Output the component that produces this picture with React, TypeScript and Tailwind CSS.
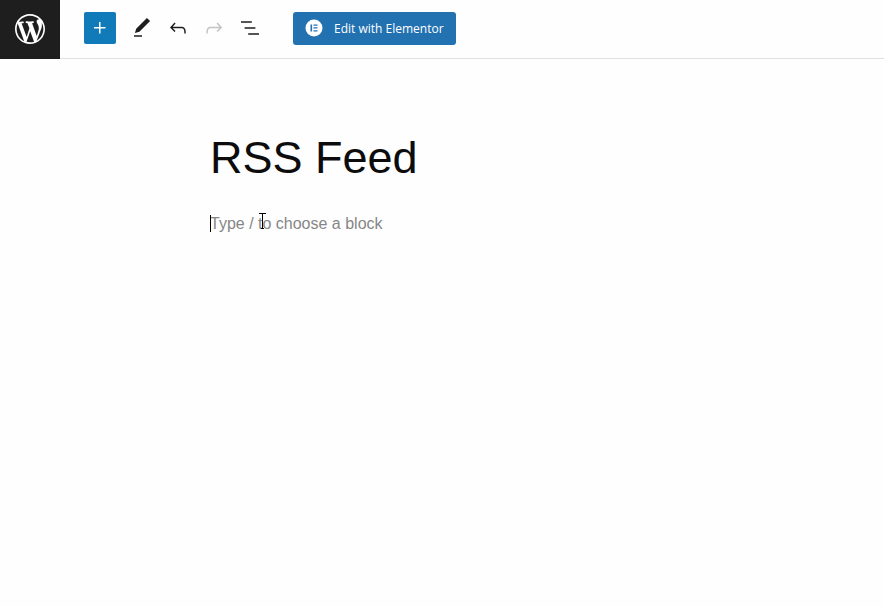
import React from "react";

const WordPressLogo = () => (
  <svg className="size-9" viewBox="-2 -2 24 24" fill="currentColor" aria-hidden="true">
    <path d="M20 10c0-5.51-4.49-10-10-10C4.48 0 0 4.49 0 10c0 5.52 4.48 10 10 10 5.51 0 10-4.48 10-10zM7.78 15.37L4.37 6.22c.55-.02 1.17-.08 1.17-.08.5-.06.44-1.13-.06-1.11 0 0-1.45.11-2.37.11-.18 0-.37 0-.58-.01C4.12 2.69 6.87 1.11 10 1.11c2.33 0 4.45.87 6.05 2.34-.68-.11-1.65.39-1.65 1.58 0 .74.45 1.36.9 2.1.35.61.55 1.36.55 2.46 0 1.49-1.4 5-1.4 5l-3.03-8.37c.54-.02.82-.17.82-.17.5-.05.44-1.25-.06-1.22 0 0-1.44.12-2.38.12-.87 0-2.33-.12-2.33-.12-.5-.03-.56 1.2-.06 1.22l.92.08 1.26 3.41zM17.41 10c.24-.64.74-1.87.43-4.25.7 1.29 1.05 2.71 1.05 4.25 0 3.29-1.73 6.24-4.4 7.78.97-2.59 1.94-5.2 2.92-7.78zM6.1 18.09C3.12 16.65 1.11 13.53 1.11 10c0-1.3.23-2.48.72-3.59C3.25 10.3 4.67 14.2 6.1 18.09zm4.03-6.63l2.58 6.98c-.86.29-1.76.45-2.71.45-.79 0-1.57-.11-2.29-.33.81-2.38 1.62-4.74 2.42-7.1z"/>
  </svg>
);

const ElementorLogo = () => (
  <svg className="size-[18px]" viewBox="0 0 18 18" aria-hidden="true">
    <circle cx="9" cy="9" r="8.5" fill="#fff"/>
    <path d="M5.5 5.5h1.6v7H5.5zM8.5 5.5h4v1.3h-4zM8.5 8.3h4v1.3h-4zM8.5 11.2h4v1.3h-4z" fill="#2271b1"/>
  </svg>
);

const Icon = ({path}: { path: string }) => (
  <svg className="size-6" viewBox="0 0 24 24" fill="currentColor" aria-hidden="true">
    <path d={path}/>
  </svg>
);

const PLUS = "M11 12.5V17.5H12.5V12.5H17.5V11H12.5V6H11V11H6V12.5H11Z";

const tools = [
  {
    label: "Tools",
    path: "M20.1 5.1L16.9 2 6.2 12.7l-1.3 4.4 4.5-1.3L20.1 5.1zM4 20.8h8v-1.5H4v1.5z"
  },
  {
    label: "Undo",
    path: "M18.3 11.7c-.6-.6-1.4-.9-2.3-.9H6.7l2.9-3.3-1.1-1-4.5 5L8.5 16l1-1-2.7-2.7H16c.5 0 .9.2 1.3.5 1 1 1 3.4 1 4.5v.3h1.5v-.2c0-1.5 0-4.3-1.5-5.7z"
  },
  {
    label: "Redo",
    disabled: true,
    path: "M15.6 6.5l-1.1 1 2.9 3.3H8c-.9 0-1.7.3-2.3.9-1.4 1.5-1.4 4.2-1.4 5.6v.2h1.5v-.3c0-1.1 0-3.5 1-4.5.3-.3.7-.5 1.3-.5h9.2L14.5 15l1.1 1.1 4.6-4.6-4.6-5z"
  },
  {
    label: "List View",
    path: "M13.8 5.2H3v1.5h10.8V5.2zm-3.6 12v1.5H21v-1.5H10.2zm7.2-6H6.6v1.5h10.8v-1.5z"
  }
];

const Header = () => (
  <header className="flex items-stretch">
    <a href="#dashboard" aria-label="View Posts" className="flex w-15 shrink-0 items-center justify-center bg-[#1e1e1e] pb-0.5 text-white">
      <WordPressLogo/>
    </a>
    <div className="flex h-[59px] flex-1 items-center border-b border-[#e0e0e0] pb-0.5 pl-6">
      <button type="button" aria-label="Add block" className="mr-2 flex size-8 items-center justify-center rounded-xs bg-[#117ab8] text-white">
        <Icon path={PLUS}/>
      </button>
      {tools.map(tool =>
        <button
          key={tool.label}
          type="button"
          aria-label={tool.label}
          disabled={tool.disabled}
          className="flex size-9 items-center justify-center text-[#1e1e1e] disabled:text-[#c4c4c4]"
        >
          <Icon path={tool.path}/>
        </button>
      )}
      <button type="button" className="ml-[25px] flex h-[33px] items-center gap-[11px] rounded-[3px] bg-[#2271b1] px-3 font-['Open_Sans','Noto_Sans',sans-serif] text-xs font-medium text-white">
        <ElementorLogo/>
        <span className="pt-0.5">Edit with Elementor</span>
      </button>
    </div>
  </header>
);

export default function App() {
  return (
    <div className="min-h-screen bg-[#fefefe] font-['Liberation_Sans',Arial,sans-serif]">
      <Header/>
      <main className="pt-18 pr-10 pl-[210px]">
        <h1 className="text-[45px] leading-[54px] text-[#0c0c0c]">RSS Feed</h1>
        <div className="relative mt-6">
          <input
            type="text"
            aria-label="Empty block"
            placeholder="Type / to choose a block"
            className="block h-[30px] w-full bg-transparent text-base text-black outline-none placeholder:text-[#868686]"
          />
          {/* text caret */}
          <span className="absolute top-1.5 left-0 h-[17px] w-px bg-black"/>
          {/* mouse pointer */}
          <svg className="absolute top-1 left-12 h-4 w-2" viewBox="0 0 8 16" fill="none" stroke="#000" aria-hidden="true">
            <path d="M1 .5h7M4.5 1v14M3 15.5h3"/>
          </svg>
        </div>
      </main>
    </div>
  );
}
